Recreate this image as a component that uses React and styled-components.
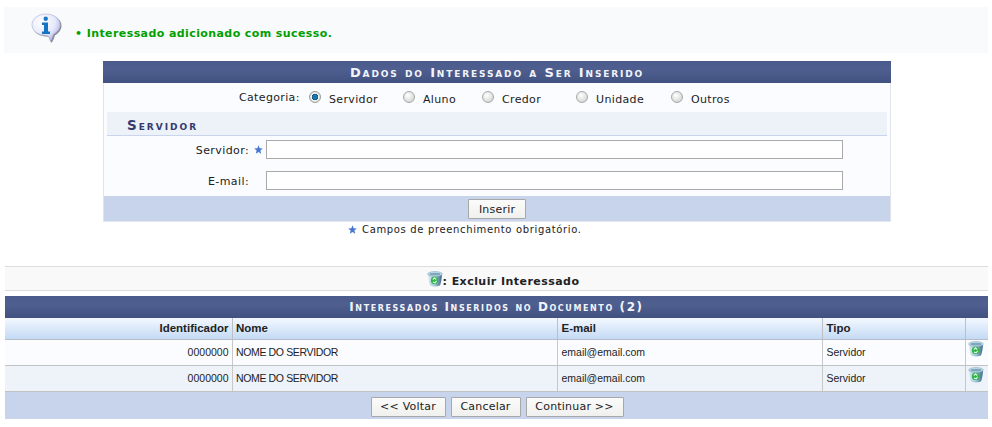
import React from "react";
import styled, { createGlobalStyle } from "styled-components";

const Global = createGlobalStyle`
  html, body { margin: 0; padding: 0; background: #fff; }
  body { font-family: "DejaVu Sans", Verdana, sans-serif; font-size: 11px; color: #222; }
`;

const Page = styled.div`
  width: 992px;
  height: 427px;
  padding-top: 7px;
  box-sizing: border-box;
  overflow: hidden;
`;

const Message = styled.div`
  margin-left: 4px;
  width: 984px;
  height: 46px;
  background: #f9fafc;
  display: flex;
  align-items: flex-start;
  box-sizing: border-box;
  padding: 6px 0 0 26px;
`;

const MessageText = styled.div`
  margin: 14px 0 0 12px;
  color: #00a000;
  font-weight: bold;
  font-size: 11px;
  line-height: 13px;
  letter-spacing: 0.41px;
`;

const FormBox = styled.form`
  margin: 8px 0 0 103px;
  width: 788px;
  background: #fbfcff;
  box-sizing: border-box;
  border-left: 1px solid #dfe3ea;
  border-right: 1px solid #dfe3ea;
  border-bottom: 1px solid #e3e6ec;
`;

const Title = styled.div`
  height: 22px;
  margin: ${(p) => (p.$flush ? "0 -1px" : "0")};
  background: linear-gradient(#4a5a8a 0%, #4f5f8f 35%, #415180 100%);
  color: #f2f4fa;
  font-weight: bold;
  font-size: ${(p) => p.$size}px;
  font-variant: small-caps;
  letter-spacing: ${(p) => p.$spacing}px;
  line-height: 23px;
  text-align: center;
`;

const CategoryRow = styled.div`
  height: 29px;
  display: flex;
  align-items: center;
  padding-left: 135px;
  box-sizing: border-box;
  letter-spacing: 0.35px;
`;

const CategoryLabel = styled.span`
  width: 70px;
  margin-top: -1px;
  color: #222;
`;

const RadioItem = styled.label`
  display: flex;
  align-items: center;
  width: ${(p) => p.$w}px;
  color: #222;
`;

const Radio = styled.input.attrs({ type: "radio" })`
  appearance: none;
  margin: -2px 8px 0 0;
  width: 12px;
  height: 12px;
  flex: none;
  border-radius: 50%;
  border: 1px solid #a8a8a8;
  box-sizing: border-box;
  background: radial-gradient(circle at 40% 35%, #ffffff, #d5d5d5 80%);
  &:checked {
    border-color: #9a9a9a;
    background: radial-gradient(circle at 50% 50%, #0a5d8f 0, #1d86b8 26%, #0c4f7a 42%, #f0f0f0 50%, #cfcfcf 100%);
  }
`;

const RadioText = styled.span`
  margin-top: 3px;
`;

const SubTitle = styled.div`
  margin: 0 3px;
  height: 24px;
  box-sizing: border-box;
  background: #edf1f8;
  border-bottom: 1px solid #c8d5ec;
  color: #333a70;
  font-weight: bold;
  font-size: 13.5px;
  font-variant: small-caps;
  letter-spacing: 2px;
  line-height: 26px;
  padding-left: 20px;
`;

const FieldRow = styled.div`
  display: flex;
  align-items: center;
  height: 19px;
  margin-top: ${(p) => p.$mt}px;
`;

const FieldLabel = styled.label`
  width: 145px;
  text-align: right;
  color: #222;
  flex: none;
  letter-spacing: 0.4px;
  padding-top: 1px;
`;

const StarSlot = styled.span`
  width: 17px;
  flex: none;
  display: flex;
  justify-content: center;
  padding-left: 1px;
  box-sizing: border-box;
`;

const TextField = styled.input`
  width: 577px;
  height: 19px;
  box-sizing: border-box;
  border: 1px solid #a9a9a9;
  background: #fff;
  padding: 0;
`;

const FormFooter = styled.div`
  margin-top: 6px;
  height: 25px;
  background: #c8d4eb;
  display: flex;
  justify-content: center;
  align-items: flex-start;
  padding-top: 3px;
  box-sizing: border-box;
`;

const Button = styled.button`
  height: 20px;
  width: ${(p) => p.$w}px;
  padding: 0;
  box-sizing: border-box;
  border: 1px solid #a8a8a8;
  border-radius: 1px;
  background: linear-gradient(#fbfbfb, #f0f0ee);
  color: #222;
  font-family: "DejaVu Sans", Verdana, sans-serif;
  font-size: 11px;
  letter-spacing: 0.2px;
`;

const Legend = styled.div`
  margin: 1px 0 0 348px;
  display: flex;
  align-items: center;
  gap: 5px;
  height: 13px;
  font-size: 10px;
  letter-spacing: 0.65px;
  color: #222;
`;

const ActionBar = styled.div`
  margin: 30px 0 0 5px;
  width: 983px;
  height: 25px;
  box-sizing: border-box;
  background: #f9f9f9;
  border-top: 1px solid #dcdcdc;
  border-bottom: 1px solid #dcdcdc;
  display: flex;
  justify-content: center;
  align-items: center;
  font-weight: bold;
  font-size: 11px;
  letter-spacing: 0.45px;
  color: #222;
  padding-left: 13px;
`;

const ActionText = styled.span`
  margin-top: 5px;
`;

const ListWrap = styled.div`
  margin: 5px 0 0 5px;
  width: 983px;
`;

const Table = styled.table`
  width: 983px;
  border-collapse: collapse;
  table-layout: fixed;
  font-family: "Liberation Sans", Arial, sans-serif;
  font-size: 10.5px;
  color: #222;
`;

const Th = styled.th`
  height: 21px;
  padding: 0 3px 0 ${(p) => p.$pl ?? 4}px;
  box-sizing: border-box;
  background: linear-gradient(#f3f8fe, #c4daf5);
  border-bottom: 1px solid #b8bcc4;
  border-left: ${(p) => (p.$first ? "0" : "1px solid #bcc0c6")};
  text-align: ${(p) => (p.$right ? "right" : "left")};
  font-weight: bold;
  font-size: 11.5px;
`;

const Tr = styled.tr`
  background: ${(p) => (p.$alt ? "#eef2f9" : "#fbfcff")};
`;

const Td = styled.td`
  height: 26px;
  padding: 0 3px 0 ${(p) => p.$pl ?? 4}px;
  box-sizing: border-box;
  border-bottom: 1px solid #c2c2c2;
  border-left: ${(p) => (p.$first ? "0" : "1px solid #c8c8c8")};
  text-align: ${(p) => (p.$right ? "right" : "left")};
  vertical-align: middle;
  letter-spacing: ${(p) => (p.$tight ? "-0.36px" : "0")};
`;

const IconCell = styled(Td)`
  padding: 0 0 6px 2px;
  line-height: 0;
`;

const ListFooter = styled.div`
  height: 27px;
  background: #c8d4eb;
  display: flex;
  justify-content: center;
  gap: 5px;
  padding: 5px 0 0 1px;
  box-sizing: border-box;
`;

const Star = () => (
  <svg width="9" height="9" viewBox="0 0 10 10">
    <path d="M5 .3 6.300 3.600 9.800 3.800 7.100 6 8 9.600 5 7.700 2 9.600 2.900 6 .2 3.800 3.700 3.600Z" fill="#4a78d0" />
  </svg>
);

const InfoIcon = () => (
  <svg width="33" height="32" viewBox="0 0 32 32">
    <defs>
      <radialGradient id="bub" cx="0.35" cy="0.3" r="0.8">
        <stop offset="0" stopColor="#ffffff" />
        <stop offset="0.6" stopColor="#e6e8fb" />
        <stop offset="1" stopColor="#a9aee8" />
      </radialGradient>
    </defs>
    <path d="M16 1.500C7.800 1.500 2 6.500 2 12.500c0 5.800 5.300 10.400 13 10.900 3 .2 4.500 1 5 5 .1 1.200 1.200 1.300 1.800.4 1.600-2.400 1.900-4.600 2.700-6.600 3.900-2 6.500-5.600 6.500-9.700C31 6.500 24.200 1.500 16 1.500Z" fill="#8a8a92" />
    <path d="M15.500 1C7.500 1 1.500 5.800 1.500 11.800c0 5.600 5.200 10 12.500 10.500 3.200.2 4.800 1.200 5.300 4.700.1.900.7.900 1.100.2 1.300-2.300 1.700-4.300 2.600-6.200 3.900-1.900 6.500-5.300 6.500-9.200C29.500 5.800 23.500 1 15.500 1Z" fill="url(#bub)" stroke="#b4b8dc" strokeWidth="0.7" />
    <circle cx="15.200" cy="5.800" r="2.200" fill="#1a78c8" />
    <path d="M11.500 9.500h6v9h2v2.500h-8V18.500h2V12h-2Z" fill="#1474c4" />
  </svg>
);

const BinIcon = () => (
  <svg width="16" height="16" viewBox="0 0 17 17">
    <defs>
      <linearGradient id="binb" x1="0" x2="1" y1="0" y2="0">
        <stop offset="0" stopColor="#dcecf4" />
        <stop offset="0.5" stopColor="#9cc4d8" />
        <stop offset="1" stopColor="#3f6682" />
      </linearGradient>
    </defs>
    <path d="M1 3.500C1.500 9 2 12.500 3 15c.4 1 2 1.500 5.500 1.500S13.600 16 14 15c1-2.500 1.500-6 2-11.500Z" fill="url(#binb)" />
    <ellipse cx="8.500" cy="3.200" rx="7.800" ry="2.600" fill="#c9e4f0" stroke="#7ea2b6" strokeWidth="0.6" />
    <ellipse cx="8.500" cy="3.400" rx="6" ry="1.500" fill="#7fa6bc" />
    <circle cx="8" cy="10" r="3.900" fill="#2db548" />
    <path d="M6.200 9.200 8 7.300 9.800 9M10.200 10.400 8.800 12.500 6.300 11.800" fill="none" stroke="#e8f8e8" strokeWidth="1.200" />
  </svg>
);

const categories = [
  { name: "Servidor", w: 94, checked: true },
  { name: "Aluno", w: 79 },
  { name: "Credor", w: 94 },
  { name: "Unidade", w: 95 },
  { name: "Outros", w: 70 },
];

const rows = [
  { alt: false },
  { alt: true },
];

export default function App() {
  return (
    <Page>
      <Global />
      <Message>
        <InfoIcon />
        <MessageText>• Interessado adicionado com sucesso.</MessageText>
      </Message>

      <FormBox>
        <Title $flush $size={13} $spacing={1.85}>Dados do Interessado a Ser Inserido</Title>
        <CategoryRow>
          <CategoryLabel>Categoria:</CategoryLabel>
          {categories.map((c) => (
            <RadioItem key={c.name} $w={c.w}>
              <Radio name="categoria" defaultChecked={!!c.checked} />
              <RadioText>{c.name}</RadioText>
            </RadioItem>
          ))}
        </CategoryRow>
        <SubTitle>Servidor</SubTitle>
        <FieldRow $mt={4}>
          <FieldLabel>Servidor:</FieldLabel>
          <StarSlot><Star /></StarSlot>
          <TextField />
        </FieldRow>
        <FieldRow $mt={12}>
          <FieldLabel>E-mail:</FieldLabel>
          <StarSlot />
          <TextField />
        </FieldRow>
        <FormFooter>
          <Button type="button" $w={58}>Inserir</Button>
        </FormFooter>
      </FormBox>

      <Legend>
        <Star />
        <span>Campos de preenchimento obrigatório.</span>
      </Legend>

      <ActionBar>
        <BinIcon />
        <ActionText>: Excluir Interessado</ActionText>
      </ActionBar>

      <ListWrap>
        <Title $size={12} $spacing={1.6}>Interessados Inseridos no Documento (2)</Title>
        <Table>
          <colgroup>
            <col width="227" />
            <col width="325" />
            <col width="265" />
            <col width="143" />
            <col width="23" />
          </colgroup>
          <thead>
            <tr>
              <Th $first $right>Identificador</Th>
              <Th $pl={3.5}>Nome</Th>
              <Th>E-mail</Th>
              <Th>Tipo</Th>
              <Th />
            </tr>
          </thead>
          <tbody>
            {rows.map((r, i) => (
              <Tr key={i} $alt={r.alt}>
                <Td $first $right>0000000</Td>
                <Td $tight $pl={3.5}>NOME DO SERVIDOR</Td>
                <Td>email@email.com</Td>
                <Td>Servidor</Td>
                <IconCell><BinIcon /></IconCell>
              </Tr>
            ))}
          </tbody>
        </Table>
        <ListFooter>
          <Button type="button" $w={75}>&lt;&lt; Voltar</Button>
          <Button type="button" $w={70}>Cancelar</Button>
          <Button type="button" $w={98}>Continuar &gt;&gt;</Button>
        </ListFooter>
      </ListWrap>
    </Page>
  );
}
